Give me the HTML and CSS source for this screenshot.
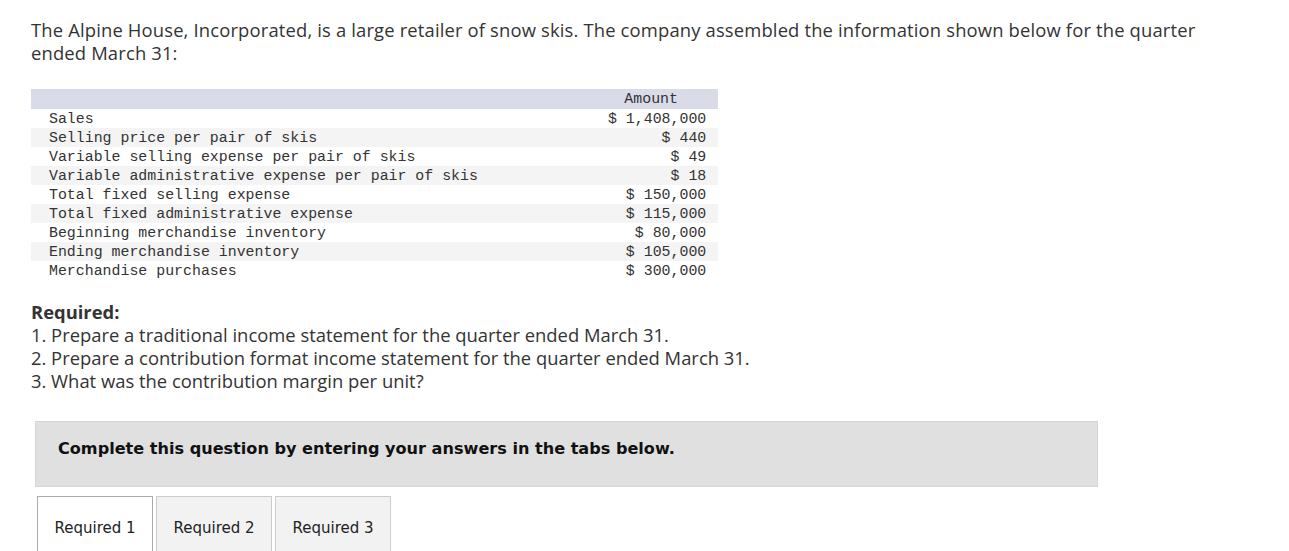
FILE: index.html
```html
<!DOCTYPE html>
<html>
<head>
<meta charset="utf-8">
<link rel="stylesheet" href="styles.css">
</head>
<body>
<div class="page">
  <p class="intro">The Alpine House, Incorporated, is a large retailer of snow skis. The company assembled the information shown below for the quarter ended March 31:</p>
  <table class="data">
    <thead>
      <tr><th class="lbl"></th><th class="amt">Amount</th></tr>
    </thead>
    <tbody>
      <tr><td class="lbl">Sales</td><td class="amt">$ 1,408,000</td></tr>
      <tr class="alt"><td class="lbl">Selling price per pair of skis</td><td class="amt">$ 440</td></tr>
      <tr><td class="lbl">Variable selling expense per pair of skis</td><td class="amt">$ 49</td></tr>
      <tr class="alt"><td class="lbl">Variable administrative expense per pair of skis</td><td class="amt">$ 18</td></tr>
      <tr><td class="lbl">Total fixed selling expense</td><td class="amt">$ 150,000</td></tr>
      <tr class="alt"><td class="lbl">Total fixed administrative expense</td><td class="amt">$ 115,000</td></tr>
      <tr><td class="lbl">Beginning merchandise inventory</td><td class="amt">$ 80,000</td></tr>
      <tr class="alt"><td class="lbl">Ending merchandise inventory</td><td class="amt">$ 105,000</td></tr>
      <tr><td class="lbl">Merchandise purchases</td><td class="amt">$ 300,000</td></tr>
    </tbody>
  </table>
  <div class="required">
    <div class="req-title">Required:</div>
    <div>1. Prepare a traditional income statement for the quarter ended March 31.</div>
    <div>2. Prepare a contribution format income statement for the quarter ended March 31.</div>
    <div>3. What was the contribution margin per unit?</div>
  </div>
  <div class="complete">Complete this question by entering your answers in the tabs below.</div>
  <div class="tabs">
    <div class="tab active">Required 1</div>
    <div class="tab">Required 2</div>
    <div class="tab">Required 3</div>
  </div>
</div>
</body>
</html>
```

FILE: styles.css
```css
html, body {
  margin: 0;
  padding: 0;
  background: #ffffff;
}
body {
  overflow: hidden;
}
.page {
  padding: 18px 0 0 31px;
  font-family: "Open Sans", "Lato", sans-serif;
  color: #333333;
}
.intro {
  margin: 0;
  width: 1205px;
  font-size: 18.4px;
  letter-spacing: 0.16px;
  line-height: 23px;
  color: #333;
}
.data {
  margin-top: 25px;
  border-collapse: collapse;
  font-family: "Liberation Mono", "DejaVu Sans Mono", monospace;
  font-size: 14.9px;
  color: #333;
}
.data th, .data td {
  padding: 0;
  height: 19px;
  line-height: 19px;
  font-weight: normal;
  white-space: nowrap;
}
.data td {
  padding-top: 1px;
  height: 18px;
  line-height: 18px;
}
.data thead tr {
  background: #d9dce8;
}
.data th.lbl {
  width: 577px;
}
.data th.amt {
  width: 85px;
  padding-right: 24px;
  text-align: center;
  line-height: 20px;
}
.data td.lbl {
  padding-left: 18px;
}
.data td.amt {
  text-align: right;
  padding-right: 12px;
}
.data tr.alt {
  background: #f4f4f4;
}
.required {
  margin-top: 20px;
  font-size: 18.4px;
  line-height: 23px;
  color: #333;
}
.req-title {
  font-weight: bold;
}
.complete {
  margin: 29px 0 0 4px;
  width: 1039px;
  height: 64px;
  padding: 0 0 0 22px;
  background: #e0e0e0;
  border: 1px solid #d6d6d6;
  font-family: "DejaVu Sans", Verdana, sans-serif;
  font-weight: bold;
  font-size: 16.1px;
  line-height: 53px;
  color: #111;
}
.tabs {
  display: flex;
  gap: 3px;
  margin: 9px 0 0 6px;
}
.tab {
  width: 114px;
  height: 70px;
  border: 1px solid #cccccc;
  background: #f2f2f2;
  font-family: "DejaVu Sans", Verdana, sans-serif;
  font-size: 15px;
  line-height: 62px;
  text-align: center;
  color: #222;
}
.tab.active {
  background: #ffffff;
  border-color: #aaaaaa;
}
```
